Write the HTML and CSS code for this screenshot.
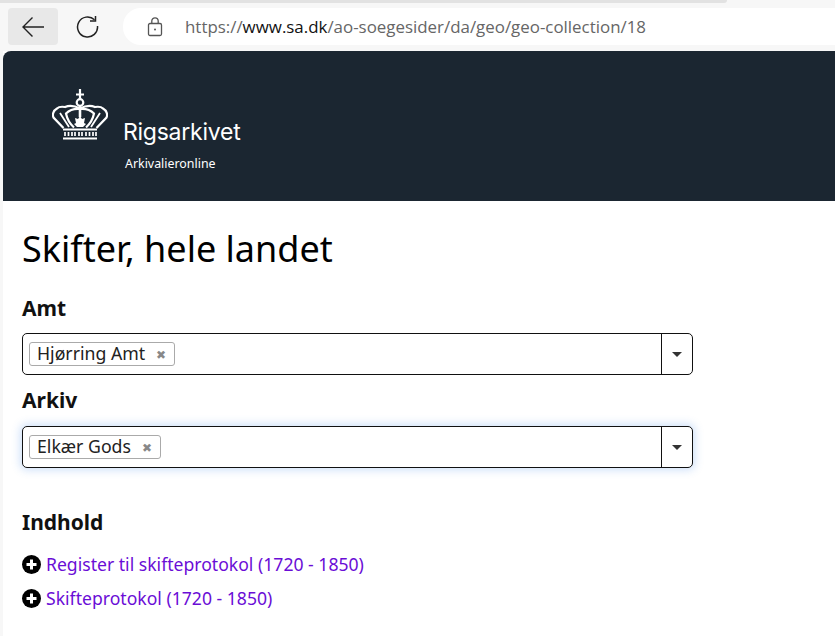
FILE: index.html
```html
<!DOCTYPE html>
<html lang="da">
<head>
    <meta charset="UTF-8">
    <title>Skifter, hele landet</title>
    <link rel="stylesheet" href="styles.css">
</head>
<body>
    <div class="tab-edge"></div>
    <div class="browser-bar">
        <div class="nav-btn active">
            <svg width="24" height="24" viewBox="0 0 24 24" fill="none" stroke="#222" stroke-width="1.4">
                <path d="M23 12H2M11.500 2.500L2 12l9.500 9.500"/>
            </svg>
        </div>
        <div class="nav-btn">
            <svg width="24" height="24" viewBox="0 0 24 24" fill="none" stroke="#222" stroke-width="1.5">
                <path d="M18.500 4.800A10 10 0 1 0 21.500 11"/>
                <path d="M19.500 1v5h-5.500"/>
            </svg>
        </div>
        <div class="address-bar">
            <svg class="lock" width="16" height="20" viewBox="0 0 16 20" fill="none" stroke="#555" stroke-width="1.300">
                <rect x="1.500" y="6.500" width="13" height="12" rx="1.500"/>
                <path d="M4.800 6.500V4a3.200 3.200 0 0 1 6.400 0v2.500"/>
                <circle cx="8" cy="12.500" r="1" fill="#555" stroke="none"/>
            </svg>
            <span class="url">https://<b>www.sa.dk</b>/ao-soegesider/da/geo/geo-collection/18</span>
        </div>
    </div>

    <div class="page">
        <header class="site-header">
            <svg class="crown" width="56" height="52" viewBox="0 0 56 52" fill="none" stroke="#fff" stroke-width="2.200">
                <!-- cross and orb -->
                <path d="M28 0v9.500M24 5.500h8" stroke-width="2.200"/>
                <circle cx="28" cy="13.500" r="3.300"/>
                <path d="M28 17v11" stroke-width="2.600"/>
                <!-- outer arches -->
                <path d="M28 19.500c-5-2.500-10-3.500-15-1.500-3-.5-6-.5-8 1.500-3.500 2-5 6-3.500 9l10 10.500"/>
                <path d="M28 19.500c5-2.500 10-3.500 15-1.500 3-.5 6-.5 8 1.500 3.500 2 5 6 3.500 9l-10 10.500"/>
                <!-- inner arches -->
                <path d="M28 20c-6-.5-11 1.500-14 4.500 1 5 3 9.500 8 14"/>
                <path d="M28 20c6-.5 11 1.500 14 4.500-1 5-3 9.500-8 14"/>
                <path d="M8 24l9 14M48 24l-9 14" stroke-width="1.800"/>
                <!-- leaf in the middle -->
                <path d="M28 27l2 3 3-1-1 5 2 1-3 3h-6l-3-3 2-1-1-5 3 1z" fill="#fff" stroke="none"/>
                <!-- band -->
                <path d="M11 40.500h34M11 49.500h34" stroke-width="2.200"/>
                <path d="M13 43v4M16.500 43v4M20 43v4M23 43v4M27 43v4M30 43v4M34 43v4M37.500 43v4M41 43v4M44 43v4" stroke-width="1.700"/>
            </svg>
            <div class="brand">
                <div class="brand-name">Rigsarkivet</div>
                <div class="brand-sub">Arkivalieronline</div>
            </div>
        </header>

        <main class="content">
            <h1>Skifter, hele landet</h1>

            <label class="field-label">Amt</label>
            <div class="select">
                <div class="select-values">
                    <span class="tag">Hjørring Amt <span class="tag-x">✖</span></span>
                </div>
                <div class="select-toggle"><span class="caret"></span></div>
            </div>

            <label class="field-label second">Arkiv</label>
            <div class="select focused">
                <div class="select-values">
                    <span class="tag">Elkær Gods <span class="tag-x">✖</span></span>
                </div>
                <div class="select-toggle"><span class="caret"></span></div>
            </div>

            <h2>Indhold</h2>
            <div class="item">
                <svg class="plus" width="19" height="19" viewBox="0 0 19 19">
                    <circle cx="9.500" cy="9.500" r="9.500" fill="#000"/>
                    <path d="M9.500 4.500v10M4.500 9.500h10" stroke="#fff" stroke-width="3"/>
                </svg>
                <a href="#">Register til skifteprotokol (1720 - 1850)</a>
            </div>
            <div class="item">
                <svg class="plus" width="19" height="19" viewBox="0 0 19 19">
                    <circle cx="9.500" cy="9.500" r="9.500" fill="#000"/>
                    <path d="M9.500 4.500v10M4.500 9.500h10" stroke="#fff" stroke-width="3"/>
                </svg>
                <a href="#">Skifteprotokol (1720 - 1850)</a>
            </div>
        </main>
    </div>
</body>
</html>
```

FILE: styles.css
```css
html, body {
    margin: 0;
    padding: 0;
    height: 636px;
    overflow: hidden;
}
body {
    background: #f7f7f7;
    font-family: "Noto Sans", sans-serif;
    color: #111;
}
.tab-edge {
    width: 727px;
    height: 3px;
    background: #e2e2e2;
    border-radius: 0 0 4px 0;
}
.browser-bar {
    height: 48px;
    box-sizing: border-box;
    padding: 5px 0 0 8px;
    display: flex;
    gap: 5px;
}
.nav-btn {
    width: 50px;
    height: 37px;
    display: flex;
    align-items: center;
    justify-content: center;
    border-radius: 4px;
}
.nav-btn.active {
    background: #e8e8e8;
}
.address-bar {
    flex: 1;
    height: 37px;
    margin-left: 5px;
    background: #fff;
    border-radius: 18px 0 0 18px;
    display: flex;
    align-items: center;
    padding-left: 24px;
}
.lock {
    margin-right: 22px;
}
.url {
    font-family: "Open Sans", sans-serif;
    font-size: 16.900px;
    color: #666;
}
.url b {
    font-weight: 400;
    color: #111;
}
.page {
    margin-left: 3px;
    background: #fff;
    height: 585px;
}
.site-header {
    height: 150px;
    background: #1b2631;
    border-radius: 8px 0 0 0;
    color: #fff;
    box-sizing: border-box;
    padding: 38px 0 0 49px;
    display: flex;
}
.crown {
    flex: none;
}
.brand {
    margin-left: 15px;
    padding-top: 28px;
}
.brand-name {
    font-family: Inter, sans-serif;
    font-size: 23px;
    line-height: 30px;
    letter-spacing: -0.250px;
}
.brand-sub {
    font-size: 12.400px;
    line-height: 16px;
    margin: 9px 0 0 2px;
}
.content {
    padding: 0 19px;
}
h1 {
    font-size: 36px;
    font-weight: 400;
    line-height: 48px;
    margin: 0;
    padding-top: 24px;
    color: #000;
}
.field-label {
    display: block;
    font-size: 21px;
    font-weight: 700;
    line-height: 28px;
    margin-top: 21px;
    margin-bottom: 11px;
}
.field-label.second {
    margin-top: 11px;
    margin-bottom: 12px;
}
.select {
    width: 671px;
    height: 42px;
    box-sizing: border-box;
    border: 1px solid #111;
    border-radius: 5px;
    display: flex;
    background: #fff;
}
.select.focused {
    box-shadow: 0 0 8px 2px rgba(60, 130, 230, 0.250);
}
.select-values {
    flex: 1;
    padding: 8px 6px;
}
.select-toggle {
    width: 30px;
    border-left: 1px solid #111;
    display: flex;
    align-items: center;
    justify-content: center;
}
.caret {
    border-style: solid;
    border-width: 5px 5px 0 5px;
    border-color: #333 transparent transparent transparent;
}
.tag {
    display: inline-flex;
    align-items: center;
    height: 24px;
    box-sizing: border-box;
    padding: 0 8px 2px 7px;
    border: 1px solid #aaa;
    border-radius: 3px;
    font-size: 17.700px;
    color: #222;
}
.tag-x {
    color: #888;
    font-size: 12px;
    margin-left: 11px;
    padding-top: 2px;
}
h2 {
    font-size: 21px;
    font-weight: 700;
    line-height: 28px;
    margin: 40px 0 11px;
}
.item {
    display: flex;
    align-items: center;
    gap: 5px;
    height: 34px;
}
.item a {
    color: #6a0dd6;
    text-decoration: none;
    font-size: 17.600px;
}
```
